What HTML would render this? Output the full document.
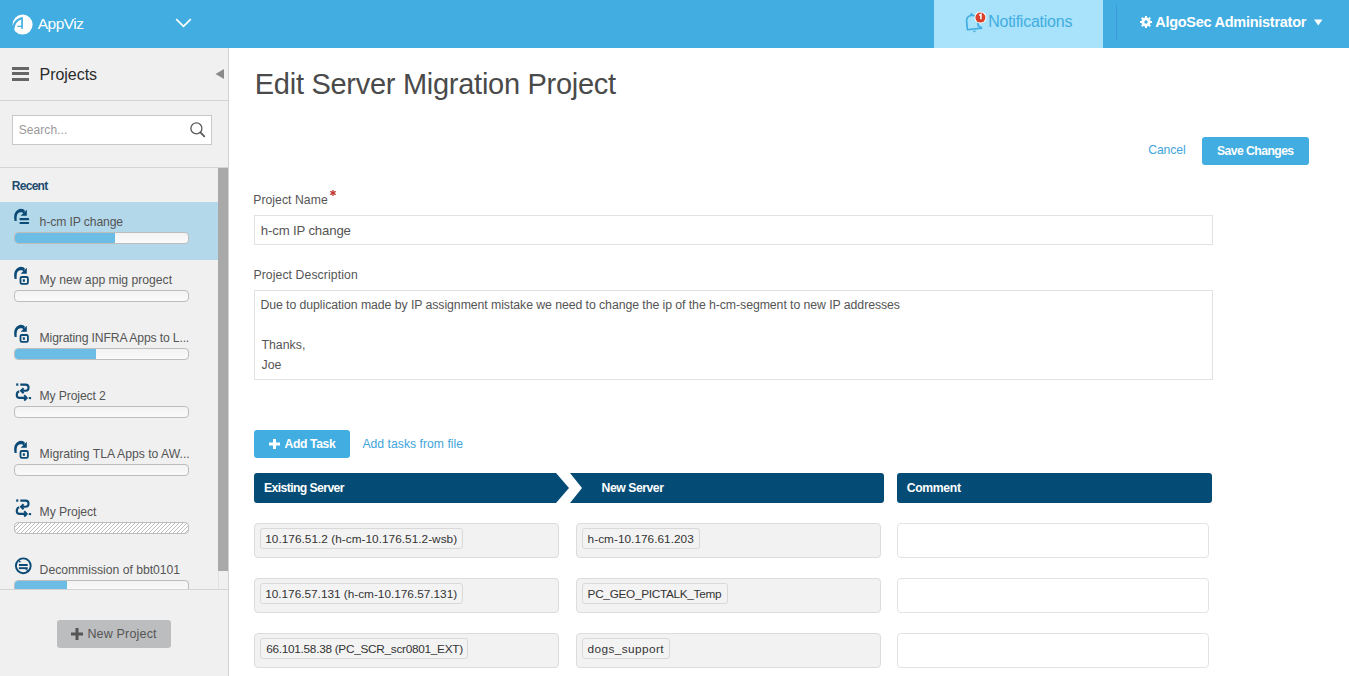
<!DOCTYPE html>
<html><head><meta charset="utf-8">
<style>
*{box-sizing:border-box;margin:0;padding:0}
html,body{width:1349px;height:676px;overflow:hidden;background:#fff;font-family:"Liberation Sans",sans-serif;color:#555}
.abs{position:absolute}
.t{position:absolute;white-space:nowrap;line-height:1}
svg{display:block}
</style></head><body>
<div class="abs" style="left:0;top:0;width:1349px;height:48px;background:#41ade0"></div>
<svg class="abs" style="left:10px;top:12px" width="26" height="26" viewBox="0 0 26 26">
<circle cx="12.6" cy="12.6" r="10" fill="#fff"/>
<path d="M2.4 16.2 C2.8 10.5 7 5.6 12.9 5.1 L12.9 16.8 L11.2 16.8 L11.2 7.6 C7.6 8.6 4.9 12 4.3 17.8 Z" fill="#41ade0"/>
<rect x="7.3" y="13.7" width="4.5" height="1.2" fill="#41ade0"/>
</svg>
<div class="t" style="left:37.80px;top:16.05px;font-size:15.5px;color:#fff;font-weight:400;letter-spacing:-0.525px;">AppViz</div>
<svg class="abs" style="left:175px;top:18px" width="18" height="11" viewBox="0 0 18 11"><path d="M1.2 1.2 L8.5 8.3 L15.8 1.2" fill="none" stroke="#fff" stroke-width="1.7"/></svg>
<div class="abs" style="left:934px;top:0;width:169px;height:48px;background:#a8e2fb"></div>
<div class="abs" style="left:1116px;top:4px;width:1px;height:36px;background:#3a97e0"></div>
<svg class="abs" style="left:960px;top:8px" width="32" height="28" viewBox="0 0 32 28">
<g transform="rotate(-6 14 15)"><path d="M6.8 21 L6.8 12.8 Q6.8 7.6 12.3 7 Q17.6 7.6 17.9 12.8 L17.9 18.2 L21 20.8 Z" fill="none" stroke="#41ade0" stroke-width="1.7" stroke-linejoin="round"/>
<circle cx="12.3" cy="6.2" r="1.3" fill="#41ade0"/>
<path d="M11.8 22.8 L15.4 22.8 L13.6 24.5 Z" fill="#41ade0"/></g>
<circle cx="20.4" cy="9.6" r="6" fill="#fff"/>
<circle cx="20.4" cy="9.6" r="5" fill="#d9412b"/>
<path d="M19.2 7.4 L20.9 6.4 L20.9 11.2" fill="none" stroke="#fff" stroke-width="1.5"/>
</svg>
<div class="t" style="left:988.20px;top:13.90px;font-size:16px;color:#41ade0;font-weight:400;letter-spacing:-0.243px;">Notifications</div>
<svg class="abs" style="left:1140px;top:16px" width="12" height="12" viewBox="0 0 12 12">
<g fill="#fff"><circle cx="6" cy="6" r="4.6"/>
<rect x="5" y="0" width="2" height="12"/><rect x="0" y="5" width="12" height="2"/>
<rect x="5" y="0" width="2" height="12" transform="rotate(45 6 6)"/><rect x="5" y="0" width="2" height="12" transform="rotate(-45 6 6)"/></g>
<circle cx="6" cy="6" r="1.7" fill="#41ade0"/>
</svg>
<div class="t" style="left:1155.20px;top:15.05px;font-size:14.5px;color:#fff;font-weight:700;letter-spacing:-0.270px;">AlgoSec Administrator</div>
<svg class="abs" style="left:1314px;top:19px" width="9" height="7" viewBox="0 0 9 7"><path d="M0 0.5 L8.5 0.5 L4.25 6.5 Z" fill="#fff"/></svg>
<div class="abs" style="left:0;top:48px;width:228px;height:628px;background:#f0f0f0"></div>
<div class="abs" style="left:228px;top:48px;width:1px;height:628px;background:#d2d2d2"></div>
<div class="abs" style="left:0;top:100px;width:228px;height:1px;background:#d4d4d4"></div>
<div class="abs" style="left:12px;top:67px;width:17px;height:3px;background:#666"></div>
<div class="abs" style="left:12px;top:72.2px;width:17px;height:3px;background:#666"></div>
<div class="abs" style="left:12px;top:78px;width:17px;height:3px;background:#666"></div>
<div class="t" style="left:39.60px;top:66.70px;font-size:16px;color:#2b2b2b;font-weight:400;letter-spacing:-0.051px;">Projects</div>
<svg class="abs" style="left:215px;top:69px" width="10" height="11" viewBox="0 0 10 11"><path d="M0.5 5 L9 0 L9 10 Z" fill="#8a8a8a"/></svg>
<div class="abs" style="left:12px;top:115px;width:200px;height:30px;background:#fff;border:1px solid #c8c8c8"></div>
<div class="t" style="left:18.80px;top:124.30px;font-size:12px;color:#9a9a9a;font-weight:400;letter-spacing:0.050px;">Search...</div>
<svg class="abs" style="left:189px;top:121px" width="17" height="17" viewBox="0 0 17 17">
<circle cx="7.4" cy="7.4" r="5.5" fill="none" stroke="#5a5a5a" stroke-width="1.3"/>
<path d="M11.4 11.4 L15.3 15.3" stroke="#5a5a5a" stroke-width="1.8" stroke-linecap="round"/>
</svg>
<div class="abs" style="left:0;top:167px;width:228px;height:1px;background:#d4d4d4"></div>
<div class="t" style="left:11.80px;top:179.50px;font-size:12px;color:#1d4a6e;font-weight:700;letter-spacing:-0.724px;">Recent</div>
<div class="abs" style="left:0;top:168px;width:218px;height:421px;overflow:hidden">
<div class="abs" style="left:0;top:34px;width:218px;height:58px;background:#b3d8ea"></div>
<svg class="abs" style="left:10px;top:37px" width="24" height="24" viewBox="0 0 24 24"><path d="M4.6 15.9 C3.9 12.5 3.9 9.5 5.4 7.2 C6.9 5 9 3.8 11 3.8 C12.6 3.8 13.9 4.5 14.9 5.6 L13.9 8.6 C13 7.7 12 7.2 10.8 7.2 C8.6 7.2 7.1 8.7 6.8 11 C6.6 12.6 6.5 14.2 6.7 15.9 Z" fill="#0b4a76"/><path d="M16.8 4.8 L16.8 10.8 L10.6 10.8 Z" fill="#0b4a76"/><rect x="9.4" y="13.1" width="9.8" height="2.2" rx="1" fill="#0b4a76"/><rect x="9.4" y="16.9" width="9.8" height="2.2" rx="1" fill="#0b4a76"/></svg>
<div class="t" style="left:39.60px;top:48.20px;font-size:12.2px;color:#555;font-weight:400;letter-spacing:-0.124px;">h-cm IP change</div>
<div class="abs" style="left:14px;top:64px;width:175px;height:12px;border:1px solid #bdbdbd;border-radius:4px;background:linear-gradient(#f3f3f3,#fafafa);overflow:hidden"><div style="width:99.8px;height:10px;background:#6bbde6"></div></div>
<svg class="abs" style="left:10px;top:95px" width="24" height="24" viewBox="0 0 24 24"><path d="M4.6 15.9 C3.9 12.5 3.9 9.5 5.4 7.2 C6.9 5 9 3.8 11 3.8 C12.6 3.8 13.9 4.5 14.9 5.6 L13.9 8.6 C13 7.7 12 7.2 10.8 7.2 C8.6 7.2 7.1 8.7 6.8 11 C6.6 12.6 6.5 14.2 6.7 15.9 Z" fill="#0b4a76"/><path d="M16.8 4.8 L16.8 10.8 L10.6 10.8 Z" fill="#0b4a76"/><rect x="10.5" y="14" width="7.4" height="6.9" rx="1.3" fill="none" stroke="#0b4a76" stroke-width="1.8"/><rect x="12.8" y="16.3" width="2.1" height="2.5" fill="#0b4a76"/></svg>
<div class="t" style="left:39.60px;top:106.20px;font-size:12.2px;color:#555;font-weight:400;letter-spacing:-0.015px;">My new app mig progect</div>
<div class="abs" style="left:14px;top:122px;width:175px;height:12px;border:1px solid #bdbdbd;border-radius:4px;background:linear-gradient(#f3f3f3,#fafafa);overflow:hidden"></div>
<svg class="abs" style="left:10px;top:153px" width="24" height="24" viewBox="0 0 24 24"><path d="M4.6 15.9 C3.9 12.5 3.9 9.5 5.4 7.2 C6.9 5 9 3.8 11 3.8 C12.6 3.8 13.9 4.5 14.9 5.6 L13.9 8.6 C13 7.7 12 7.2 10.8 7.2 C8.6 7.2 7.1 8.7 6.8 11 C6.6 12.6 6.5 14.2 6.7 15.9 Z" fill="#0b4a76"/><path d="M16.8 4.8 L16.8 10.8 L10.6 10.8 Z" fill="#0b4a76"/><rect x="10.5" y="14" width="7.4" height="6.9" rx="1.3" fill="none" stroke="#0b4a76" stroke-width="1.8"/><rect x="12.8" y="16.3" width="2.1" height="2.5" fill="#0b4a76"/></svg>
<div class="t" style="left:39.60px;top:164.20px;font-size:12.2px;color:#555;font-weight:400;letter-spacing:-0.152px;">Migrating INFRA Apps to L...</div>
<div class="abs" style="left:14px;top:180px;width:175px;height:12px;border:1px solid #bdbdbd;border-radius:4px;background:linear-gradient(#f3f3f3,#fafafa);overflow:hidden"><div style="width:81.1px;height:10px;background:#6bbde6"></div></div>
<svg class="abs" style="left:10px;top:211px" width="24" height="24" viewBox="0 0 24 24"><rect x="6.2" y="4.4" width="2.1" height="2.3" fill="#0b4a76"/><path d="M10.3 5.65 L15.5 5.65 A3 3 0 0 1 15.5 11.75 L11.5 11.75" fill="none" stroke="#0b4a76" stroke-width="2.1"/><path d="M13.6 9.2 L11 11.75 L13.6 14.3" fill="none" stroke="#0b4a76" stroke-width="2"/><path d="M9.2 12.3 Q6.75 13 6.75 15.9 Q6.75 18.9 9.75 18.9 L15.5 18.9" fill="none" stroke="#0b4a76" stroke-width="2.1"/><path d="M14.2 16.3 L16.7 18.9 L14.2 21.5" fill="none" stroke="#0b4a76" stroke-width="2"/><rect x="18.8" y="18.1" width="2.3" height="2" fill="#0b4a76"/></svg>
<div class="t" style="left:39.60px;top:222.20px;font-size:12.2px;color:#555;font-weight:400;letter-spacing:-0.143px;">My Project 2</div>
<div class="abs" style="left:14px;top:238px;width:175px;height:12px;border:1px solid #bdbdbd;border-radius:4px;background:linear-gradient(#f3f3f3,#fafafa);overflow:hidden"></div>
<svg class="abs" style="left:10px;top:269px" width="24" height="24" viewBox="0 0 24 24"><path d="M4.6 15.9 C3.9 12.5 3.9 9.5 5.4 7.2 C6.9 5 9 3.8 11 3.8 C12.6 3.8 13.9 4.5 14.9 5.6 L13.9 8.6 C13 7.7 12 7.2 10.8 7.2 C8.6 7.2 7.1 8.7 6.8 11 C6.6 12.6 6.5 14.2 6.7 15.9 Z" fill="#0b4a76"/><path d="M16.8 4.8 L16.8 10.8 L10.6 10.8 Z" fill="#0b4a76"/><rect x="10.5" y="14" width="7.4" height="6.9" rx="1.3" fill="none" stroke="#0b4a76" stroke-width="1.8"/><rect x="12.8" y="16.3" width="2.1" height="2.5" fill="#0b4a76"/></svg>
<div class="t" style="left:39.60px;top:280.20px;font-size:12.2px;color:#555;font-weight:400;letter-spacing:-0.013px;">Migrating TLA Apps to AW...</div>
<div class="abs" style="left:14px;top:296px;width:175px;height:12px;border:1px solid #bdbdbd;border-radius:4px;background:linear-gradient(#f3f3f3,#fafafa);overflow:hidden"></div>
<svg class="abs" style="left:10px;top:327px" width="24" height="24" viewBox="0 0 24 24"><rect x="6.2" y="4.4" width="2.1" height="2.3" fill="#0b4a76"/><path d="M10.3 5.65 L15.5 5.65 A3 3 0 0 1 15.5 11.75 L11.5 11.75" fill="none" stroke="#0b4a76" stroke-width="2.1"/><path d="M13.6 9.2 L11 11.75 L13.6 14.3" fill="none" stroke="#0b4a76" stroke-width="2"/><path d="M9.2 12.3 Q6.75 13 6.75 15.9 Q6.75 18.9 9.75 18.9 L15.5 18.9" fill="none" stroke="#0b4a76" stroke-width="2.1"/><path d="M14.2 16.3 L16.7 18.9 L14.2 21.5" fill="none" stroke="#0b4a76" stroke-width="2"/><rect x="18.8" y="18.1" width="2.3" height="2" fill="#0b4a76"/></svg>
<div class="t" style="left:39.60px;top:338.20px;font-size:12.2px;color:#555;font-weight:400;letter-spacing:-0.094px;">My Project</div>
<div class="abs" style="left:14px;top:354px;width:175px;height:12px;border:1px solid #bdbdbd;border-radius:4px;background:#fff;overflow:hidden"><svg width="173" height="10"><defs><pattern id="hp" width="4" height="4" patternUnits="userSpaceOnUse"><path d="M-1 1 L1 -1 M0 4 L4 0 M3 5 L5 3" stroke="#b4b4b4" stroke-width="0.9"/></pattern></defs><rect width="173" height="10" fill="url(#hp)"/></svg></div>
<svg class="abs" style="left:10px;top:385px" width="24" height="24" viewBox="0 0 24 24"><circle cx="13.3" cy="12.8" r="7.4" fill="none" stroke="#0b4a76" stroke-width="1.9"/><path d="M8.2 7.2 L11.6 9 L9.4 9.6 Z" fill="#0b4a76"/><path d="M18.4 18.4 L15 16.6 L17.2 16 Z" fill="#0b4a76"/><rect x="8.9" y="11" width="8.8" height="2" fill="#0b4a76"/><rect x="8.9" y="14.2" width="8.8" height="1.9" fill="#0b4a76"/></svg>
<div class="t" style="left:39.60px;top:396.20px;font-size:12.2px;color:#555;font-weight:400;letter-spacing:-0.020px;">Decommission of bbt0101</div>
<div class="abs" style="left:14px;top:412px;width:175px;height:12px;border:1px solid #bdbdbd;border-radius:4px;background:linear-gradient(#f3f3f3,#fafafa);overflow:hidden"><div style="width:52.4px;height:10px;background:#6bbde6"></div></div>
</div>
<div class="abs" style="left:218px;top:168px;width:10px;height:421px;background:#f0f0f0;border-left:1px solid #e2e2e2"></div>
<div class="abs" style="left:218px;top:168px;width:10px;height:403px;background:#a9a9a9"></div>
<div class="abs" style="left:0;top:589px;width:228px;height:1px;background:#d4d4d4"></div>
<div class="abs" style="left:57px;top:620px;width:114px;height:28px;background:#bcbdbf;border-radius:3px"></div>
<svg class="abs" style="left:71px;top:628px" width="12" height="12" viewBox="0 0 12 12"><rect x="4.5" y="0" width="3" height="12" fill="#555"/><rect x="0" y="4.5" width="12" height="3" fill="#555"/></svg>
<div class="t" style="left:87.40px;top:628.05px;font-size:12.5px;color:#555;font-weight:400;letter-spacing:0.182px;">New Project</div>
<div class="t" style="left:254.80px;top:69.80px;font-size:29px;color:#4a4a4a;font-weight:400;letter-spacing:-0.277px;">Edit Server Migration Project</div>
<div class="t" style="left:1148.20px;top:144.30px;font-size:12.2px;color:#41a5dc;font-weight:400;letter-spacing:-0.081px;">Cancel</div>
<div class="abs" style="left:1202px;top:137px;width:107px;height:28px;background:#41ade0;border-radius:3px"></div>
<div class="t" style="left:1217.00px;top:145.10px;font-size:12.2px;color:#fff;font-weight:700;letter-spacing:-0.562px;">Save Changes</div>
<div class="t" style="left:253.20px;top:194.00px;font-size:12.2px;color:#555;font-weight:400;letter-spacing:0.061px;">Project Name</div>
<svg class="abs" style="left:329.1px;top:189.1px" width="8" height="8" viewBox="0 0 8 8"><g stroke="#c23b32" stroke-width="1.35" stroke-linecap="round"><path d="M4 1.4 L4 6.6"/><path d="M1.75 2.7 L6.25 5.3"/><path d="M6.25 2.7 L1.75 5.3"/></g></svg>
<div class="abs" style="left:254px;top:215px;width:959px;height:30px;border:1px solid #e2e2e2;background:#fff"></div>
<div class="t" style="left:260.80px;top:224.40px;font-size:13.2px;color:#555;font-weight:400;letter-spacing:-0.154px;">h-cm IP change</div>
<div class="t" style="left:253.40px;top:269.40px;font-size:12.2px;color:#555;font-weight:400;letter-spacing:0.113px;">Project Description</div>
<div class="abs" style="left:254px;top:290px;width:959px;height:90px;border:1px solid #e2e2e2;background:#fff"></div>
<div class="t" style="left:260.40px;top:299.35px;font-size:12.3px;color:#555;font-weight:400;letter-spacing:-0.071px;">Due to duplication made by IP assignment mistake we need to change the ip of the h-cm-segment to new IP addresses</div>
<div class="t" style="left:261.40px;top:339.35px;font-size:12.3px;color:#555;font-weight:400;letter-spacing:0.046px;">Thanks,</div>
<div class="t" style="left:261.40px;top:359.35px;font-size:12.3px;color:#555;font-weight:400;letter-spacing:0.098px;">Joe</div>
<div class="abs" style="left:254px;top:430px;width:96px;height:28px;background:#41ade0;border-radius:3px"></div>
<svg class="abs" style="left:269px;top:439px" width="11" height="10" viewBox="0 0 11 10"><rect x="4" y="0" width="3" height="10" fill="#fff"/><rect x="0" y="3.5" width="11" height="3" fill="#fff"/></svg>
<div class="t" style="left:284.60px;top:438.30px;font-size:12.2px;color:#fff;font-weight:700;letter-spacing:-0.407px;">Add Task</div>
<div class="t" style="left:362.40px;top:438.30px;font-size:12.2px;color:#41a5dc;font-weight:400;letter-spacing:0.025px;">Add tasks from file</div>
<svg class="abs" style="left:254px;top:473px" width="959" height="30" viewBox="0 0 959 30">
<path d="M3 0 L302 0 L315 15 L302 30 L3 30 Q0 30 0 27 L0 3 Q0 0 3 0 Z" fill="#044c75"/>
<path d="M316 0 L627 0 Q630 0 630 3 L630 27 Q630 30 627 30 L316 30 L328 15 Z" fill="#044c75"/>
<rect x="643" y="0" width="315" height="30" rx="3" fill="#044c75"/>
</svg>
<div class="t" style="left:264.00px;top:482.40px;font-size:12.2px;color:#fff;font-weight:700;letter-spacing:-0.587px;">Existing Server</div>
<div class="t" style="left:601.60px;top:482.40px;font-size:12.2px;color:#fff;font-weight:700;letter-spacing:-0.454px;">New Server</div>
<div class="t" style="left:906.80px;top:482.40px;font-size:12.2px;color:#fff;font-weight:700;letter-spacing:-0.340px;">Comment</div>
<div class="abs" style="left:254px;top:523px;width:305px;height:35px;background:#f2f2f2;border:1px solid #dcdcdc;border-radius:4px"></div>
<div class="abs" style="left:260px;top:528px;width:203px;height:21px;background:#f3f3f3;border:1px solid #d9d9d9;border-radius:3px"></div>
<div class="t" style="left:265.20px;top:533.80px;font-size:11.8px;color:#333;font-weight:400;letter-spacing:0.034px;">10.176.51.2 (h-cm-10.176.51.2-wsb)</div>
<div class="abs" style="left:576px;top:523px;width:305px;height:35px;background:#f2f2f2;border:1px solid #dcdcdc;border-radius:4px"></div>
<div class="abs" style="left:582px;top:528px;width:118px;height:21px;background:#f3f3f3;border:1px solid #d9d9d9;border-radius:3px"></div>
<div class="t" style="left:587.60px;top:533.80px;font-size:11.8px;color:#333;font-weight:400;letter-spacing:0.035px;">h-cm-10.176.61.203</div>
<div class="abs" style="left:897px;top:523px;width:312px;height:35px;background:#fff;border:1px solid #e3e3e3;border-radius:4px"></div>
<div class="abs" style="left:254px;top:578px;width:305px;height:35px;background:#f2f2f2;border:1px solid #dcdcdc;border-radius:4px"></div>
<div class="abs" style="left:260px;top:583px;width:203px;height:21px;background:#f3f3f3;border:1px solid #d9d9d9;border-radius:3px"></div>
<div class="t" style="left:265.20px;top:588.80px;font-size:11.8px;color:#333;font-weight:400;letter-spacing:-0.007px;">10.176.57.131 (h-cm-10.176.57.131)</div>
<div class="abs" style="left:576px;top:578px;width:305px;height:35px;background:#f2f2f2;border:1px solid #dcdcdc;border-radius:4px"></div>
<div class="abs" style="left:582px;top:583px;width:146px;height:21px;background:#f3f3f3;border:1px solid #d9d9d9;border-radius:3px"></div>
<div class="t" style="left:587.60px;top:588.80px;font-size:11.8px;color:#333;font-weight:400;letter-spacing:-0.304px;">PC_GEO_PICTALK_Temp</div>
<div class="abs" style="left:897px;top:578px;width:312px;height:35px;background:#fff;border:1px solid #e3e3e3;border-radius:4px"></div>
<div class="abs" style="left:254px;top:633px;width:305px;height:35px;background:#f2f2f2;border:1px solid #dcdcdc;border-radius:4px"></div>
<div class="abs" style="left:260px;top:638px;width:208px;height:21px;background:#f3f3f3;border:1px solid #d9d9d9;border-radius:3px"></div>
<div class="t" style="left:266.20px;top:643.80px;font-size:11.8px;color:#333;font-weight:400;letter-spacing:-0.280px;">66.101.58.38 (PC_SCR_scr0801_EXT)</div>
<div class="abs" style="left:576px;top:633px;width:305px;height:35px;background:#f2f2f2;border:1px solid #dcdcdc;border-radius:4px"></div>
<div class="abs" style="left:582px;top:638px;width:88px;height:21px;background:#f3f3f3;border:1px solid #d9d9d9;border-radius:3px"></div>
<div class="t" style="left:587.60px;top:643.80px;font-size:11.8px;color:#333;font-weight:400;letter-spacing:0.408px;">dogs_support</div>
<div class="abs" style="left:897px;top:633px;width:312px;height:35px;background:#fff;border:1px solid #e3e3e3;border-radius:4px"></div>
</body></html>
